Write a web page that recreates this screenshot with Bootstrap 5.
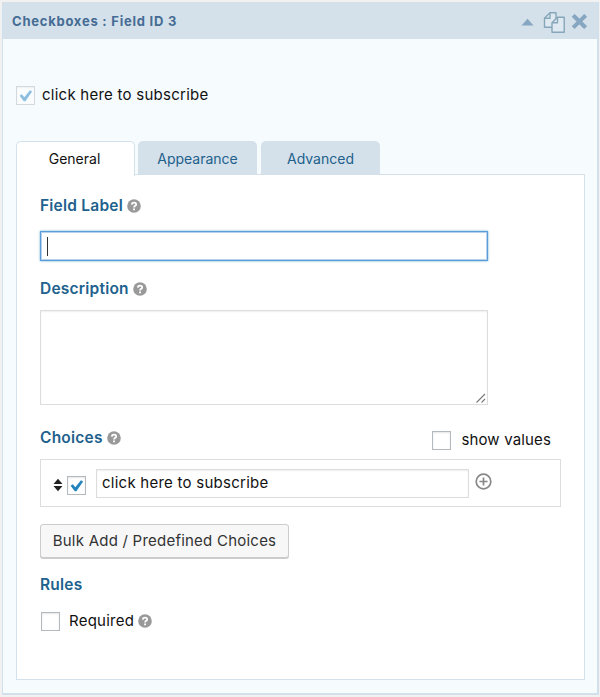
<!DOCTYPE html>
<html lang="en">
<head>
<meta charset="utf-8">
<meta name="viewport" content="width=device-width, initial-scale=1">
<title>Checkboxes field settings</title>
<link href="https://cdn.jsdelivr.net/npm/bootstrap@5.3.0/dist/css/bootstrap.min.css" rel="stylesheet">
<style>
body{background:#f1f1f1;font-family:Inter,"Liberation Sans",sans-serif;font-size:15px;line-height:20px;color:#111;overflow:hidden}
.field-panel{margin:2px 1px 0 2px;height:693px;border:1px solid #d2e0eb;border-width:0 2px 2px 1px;background:#f6fbfe}
.field-head{height:37px;background:#d5e1ea;color:#456c94;padding:0 9px 0 9px}
.field-title{font-size:13px;font-weight:700;letter-spacing:.76px}
.preview-row{padding:47px 0 0 13px;height:102px}
.tick{width:19px;height:19px;border:1px solid #b4b9be;box-shadow:inset 0 1px 2px rgba(0,0,0,.1);background:#fff;flex:none}
.tick.faded{opacity:.5}
.tick svg{display:block;width:17px;height:17px}
.field-tabs{height:34px;margin-left:13px;gap:3px;border:0;position:relative;z-index:1}
.field-tabs .nav-link{width:119px;height:34px;padding:0;border:0;margin:0;border-radius:5px 5px 0 0;background:#d5e1ea;color:#21608b;font-size:14px;line-height:35px;text-align:center}
.field-tabs .nav-link:last-child{margin-left:1px}
.field-tabs .nav-link.active{height:35px;background:#fff;color:#111;border:1px solid #d5e1ea;border-bottom:0;line-height:33px;padding-right:2px}
.field-body{margin-left:13px;width:569px;height:506px;margin-top:-1px;border:1px solid #d5e1ea;background:#fff;padding:21px 23px 0}
.field-body,.preview-row{letter-spacing:.25px}
.heading{font-weight:600;font-size:15.5px;letter-spacing:.22px;color:#21618d;gap:4px;height:20px}
.text-box{border:1px solid #ddd;border-radius:0;box-shadow:inset 0 1px 2px rgba(0,0,0,.07);background:#fff;color:#111;padding:0 5px;font-size:15px;letter-spacing:inherit}
.label-input{width:448px;height:30px;margin-top:15px;border:1px solid #5b9dd9;outline:1px solid #b5d1ee;outline-offset:-2px;box-shadow:0 0 2px rgba(30,140,190,.7);padding-left:6px}
.caret{width:1px;height:19px;background:#333}
.desc-box{width:448px;height:95px;margin:11px 0 0;padding:0}
.choice-row{width:521px;height:48px;border:1px solid #ddd;padding:0 0 0 12px}
.choice-input{width:373px;height:29px;margin:0 6px 0 10px}
.bulk-btn{width:249px;height:34px;margin-top:17px;padding:0;border:1px solid #ccc;border-radius:3px;background:#f7f7f7;box-shadow:0 1px 0 #ccc;color:#333;font-size:15px;letter-spacing:.23px}
</style>
<script src="https://cdn.jsdelivr.net/npm/bootstrap@5.3.0/dist/js/bootstrap.bundle.min.js"></script>
</head>
<body>
<svg class="d-none">
<symbol id="help" viewBox="0 0 14 14"><circle cx="7" cy="7" r="6.8" fill="#999"/><path d="M4.8 5.6C4.9 2.9 9.2 3 9.2 5.4 9.2 6.9 7.1 6.8 7.1 8.5" fill="none" stroke="#fff" stroke-width="1.8"/><path d="M6.1 9.5H8v1.8H6.1z" fill="#fff"/></symbol>
<symbol id="check" viewBox="0 0 17 17"><path d="M2.6 8.8 4.8 7.2 7.3 10.2 13 3.2 15.1 4.5 8.4 14.2H6.8Z" fill="#2384bd"/></symbol>
</svg>
<main class="field-panel">
  <header class="field-head d-flex align-items-center justify-content-between">
    <span class="field-title">Checkboxes : Field ID 3</span>
    <div class="d-flex align-items-center">
      <svg style="margin-top:2px" width="13" height="8" viewBox="0 0 13 8"><path d="M.5 7.5 6.5.8l6 6.7z" fill="#86a6c1"/></svg>
      <svg style="margin:3px 0 0 9px" width="23" height="23" viewBox="0 0 23 23" fill="#dfe9f1" stroke="#86a6b9" stroke-width="1.4" stroke-linejoin="round"><path d="M1.5 7.2 7 1.7h6v14.5H1.5z"/><path d="M1.5 7.2H7V1.7" fill="none"/><path d="M9 11.7 14.5 6.2h6.7v15H9z"/><path d="M9 11.7h5.5V6.2" fill="none"/></svg>
      <svg style="margin:2px 0 0 5px" width="17" height="17" viewBox="0 0 17 17"><path d="m3.6 3.8 9.6 9.4M13.2 3.8 3.6 13.2" stroke="#86a6c1" stroke-width="4.1" stroke-linecap="square"/></svg>
    </div>
  </header>
  <div class="preview-row d-flex align-items-start">
    <span class="tick faded"><svg><use href="#check"/></svg></span><span style="margin:-1px 0 0 7px">click here to subscribe</span>
  </div>
  <nav class="field-tabs nav">
    <a class="nav-link active">General</a><a class="nav-link">Appearance</a><a class="nav-link">Advanced</a>
  </nav>
  <section class="field-body">
    <div class="heading d-flex align-items-center"><span>Field Label</span><svg width="14" height="14"><use href="#help"/></svg></div>
    <div class="text-box label-input d-flex align-items-center"><span class="caret"></span></div>
    <div class="heading d-flex align-items-center" style="margin-top:18px"><span>Description</span><svg width="14" height="14"><use href="#help"/></svg></div>
    <div class="text-box desc-box d-flex align-items-end justify-content-end"><svg width="11" height="11" viewBox="0 0 11 11"><path d="M.5 9.5 9 1M5.5 9.5 9 6" stroke="#777" stroke-width="1.1"/></svg></div>
    <div class="d-flex justify-content-between" style="margin-top:23px;width:511px">
      <div class="heading d-flex align-items-center"><span>Choices</span><svg width="14" height="14"><use href="#help"/></svg></div>
      <div class="d-flex align-items-center" style="margin-top:2px"><span class="tick"></span><span style="margin-left:10px;letter-spacing:.15px">show values</span></div>
    </div>
    <div class="choice-row d-flex align-items-center" style="margin-top:9px">
      <svg style="margin-top:3px" width="10" height="14" viewBox="0 0 10 14"><path d="M.5 6 5 .8 9.5 6zM.5 8h9L5 13.2z" fill="#222"/></svg>
      <span class="tick" style="margin:4px 0 0 4px"><svg><use href="#check"/></svg></span>
      <div class="text-box choice-input d-flex align-items-center">click here to subscribe</div>
      <svg style="margin-top:-3px" width="17" height="17" viewBox="0 0 17 17" fill="none" stroke="#888" stroke-width="1.7"><circle cx="8.5" cy="8.5" r="7.3"/><path d="M4.4 8.5h8.2M8.5 4.4v8.2"/></svg>
    </div>
    <button class="btn bulk-btn d-block">Bulk Add / Predefined Choices</button>
    <div class="heading d-flex align-items-center" style="margin-top:17px">Rules</div>
    <div class="d-flex align-items-center" style="margin-top:16px;padding-left:1px"><span class="tick"></span><span style="margin:0 4px 0 9px">Required</span><svg width="14" height="14"><use href="#help"/></svg></div>
  </section>
</main>
</body>
</html>
